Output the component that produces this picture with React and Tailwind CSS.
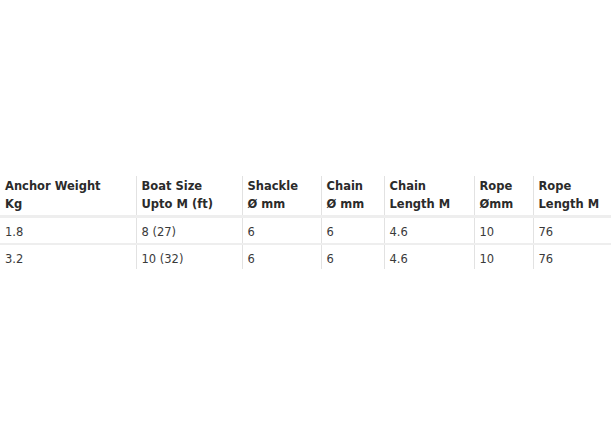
const headers = [
  ["Anchor Weight", "Kg"],
  ["Boat Size", "Upto M (ft)"],
  ["Shackle", "Ø mm"],
  ["Chain", "Ø mm"],
  ["Chain", "Length M"],
  ["Rope", "Ømm"],
  ["Rope", "Length M"],
];

const rows = [
  ["1.8", "8 (27)", "6", "6", "4.6", "10", "76"],
  ["3.2", "10 (32)", "6", "6", "4.6", "10", "76"],
];

const widths = ["w-[136px]", "w-[106px]", "w-[79px]", "w-[63px]", "w-[90px]", "w-[59px]", "w-[78px]"];

export default function App() {
  return (
    <div className="w-[611px] h-[442px] bg-white font-['DejaVu_Sans',Verdana,sans-serif] text-[11.5px]">
      <div className="pt-[176px]">
        <table className="border-collapse table-fixed w-[611px]">
          <thead>
            <tr>
              {headers.map((h, i) => (
                <th
                  key={i}
                  className={`${widths[i]} text-left align-top font-bold text-[#2b2b2b] leading-[18px] pl-[5px] pt-[1px] pb-[2px] border-b-[3px] border-b-[#eeeeee] ${i > 0 ? "border-l border-l-[#e2e2e2]" : ""}`}
                >
                  {h[0]}
                  <br />
                  {h[1]}
                </th>
              ))}
            </tr>
          </thead>
          <tbody>
            {rows.map((r, ri) => (
              <tr key={ri}>
                {r.map((c, i) => (
                  <td
                    key={i}
                    className={`text-[#3a3a3a] leading-[18px] pl-[5px] pt-[5px] align-top ${ri === 0 ? "pb-[2px] border-b-2 border-b-[#eeeeee]" : "pb-[1px]"} ${i > 0 ? "border-l border-l-[#e2e2e2]" : ""}`}
                  >
                    {c}
                  </td>
                ))}
              </tr>
            ))}
          </tbody>
        </table>
      </div>
    </div>
  );
}
